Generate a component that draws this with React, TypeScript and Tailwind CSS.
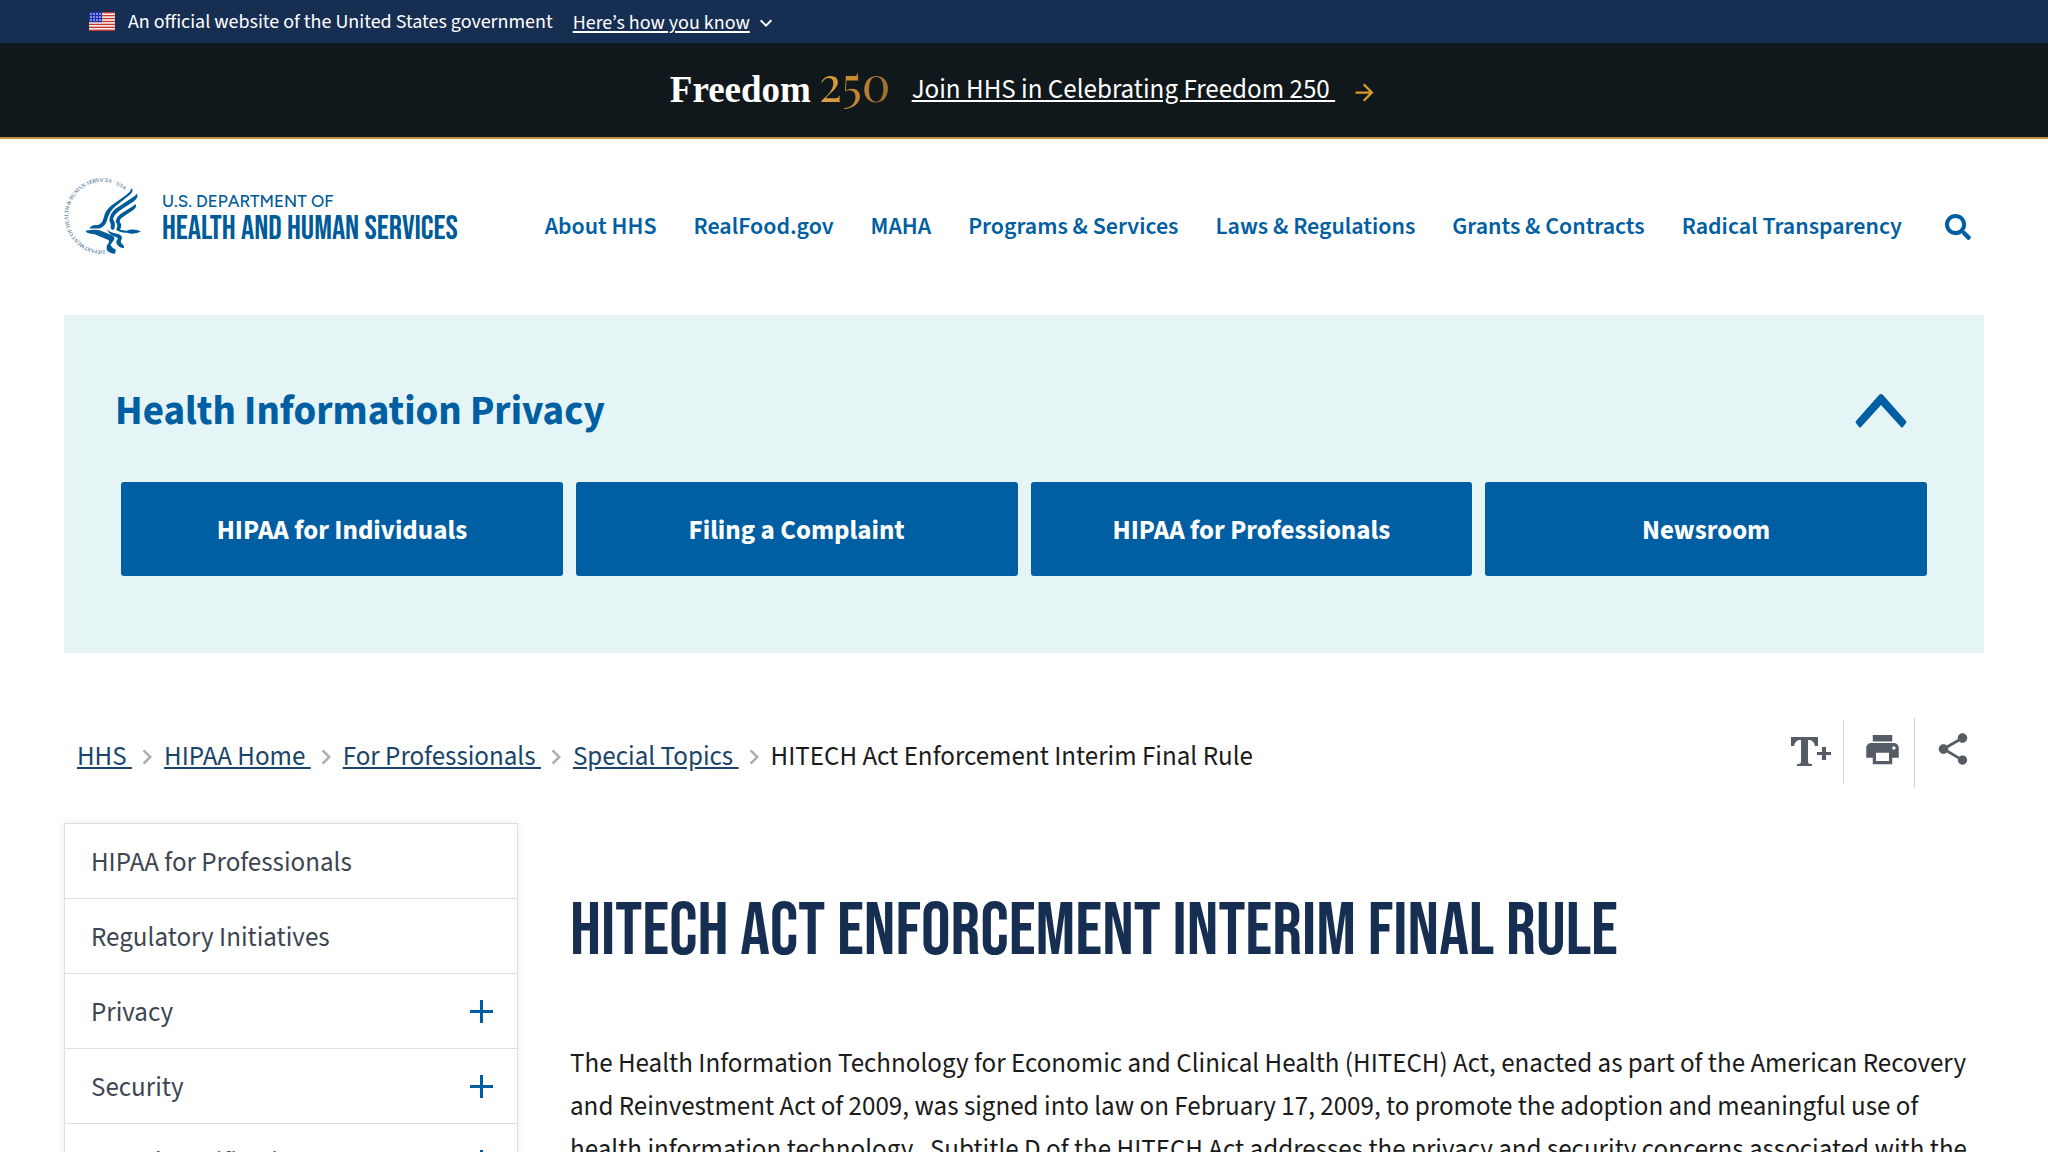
import { useState } from "react";
import { FaSearch } from "react-icons/fa";
import { MdArrowForward, MdExpandMore, MdNavigateNext, MdPrint, MdShare } from "react-icons/md";

const NAV_LINKS = [
  "About HHS",
  "RealFood.gov",
  "MAHA",
  "Programs & Services",
  "Laws & Regulations",
  "Grants & Contracts",
  "Radical Transparency",
];

const SECTION_LINKS = ["HIPAA for Individuals", "Filing a Complaint", "HIPAA for Professionals", "Newsroom"];

const CRUMBS = ["HHS", "HIPAA Home", "For Professionals", "Special Topics"];

const SIDE_LINKS = [
  { label: "HIPAA for Professionals", children: false },
  { label: "Regulatory Initiatives", children: false },
  { label: "Privacy", children: true },
  { label: "Security", children: true },
  { label: "Breach Notification", children: true },
];

function FlagIcon() {
  return (
    <svg viewBox="0 0 26 19" className="h-[19px] w-[26px]" aria-hidden="true">
      <rect width="26" height="19" fill="#fff" />
      {[0, 1, 2, 3, 4, 5, 6].map((i) => (
        <rect key={i} y={i * 2.92} width="26" height="1.46" fill="#c23a2b" />
      ))}
      <rect width="13" height="10.2" fill="#1e33b1" />
      {[2, 5, 8].map((y) =>
        [2, 5, 8, 11].map((x) => <circle key={`${x}-${y}`} cx={x} cy={y} r="0.8" fill="#fff" />)
      )}
    </svg>
  );
}

function HhsSeal() {
  return (
    <svg viewBox="42 50 232 232" className="size-[78px]" aria-hidden="true">
      <path id="seal-ring" d="M163 268 A102 102 0 1 1 240 108" fill="none" />
      <text className="fill-[#1a4f7c] font-['Liberation_Serif',serif] text-[16px]">
        <textPath href="#seal-ring">DEPARTMENT OF HEALTH &amp; HUMAN SERVICES · USA</textPath>
      </text>
      <g fill="#005b99">
        {/* wing feathers */}
        <path d="M244 83 Q250 92 238 103 L196 136 Q178 151 172 173 Q166 198 148 203 L118 203 Q122 194 136 193 Q155 194 160 172 Q163 150 184 134 L226 104 Q240 94 244 83Z" />
        <path d="M259 100 Q265 110 250 122 L208 150 Q190 163 188 176 Q198 190 190 208 Q182 206 180 200 Q184 192 177 180 Q177 160 196 144 L240 115 Q254 107 259 100Z" />
        <path d="M254 130 Q261 138 247 149 L217 169 Q206 177 208 184 Q217 194 208 206 Q216 209 228 210 Q246 202 271 211 Q250 224 230 216 Q210 217 197 207 Q205 195 196 184 Q196 171 210 160 L238 142 Q250 136 254 130Z" />
        {/* head, body and talons */}
        <path d="M105 210 L128 207 Q140 206 150 209 L184 223 Q196 229 190 238 L180 252 Q186 262 196 266 L194 278 Q178 278 170 268 Q166 256 174 247 Q180 239 170 236 L142 224 Q134 219 122 219 Q110 218 105 210Z" />
        <path d="M170 205 Q178 216 196 218 Q218 222 214 234 Q206 244 218 252 Q222 256 220 262 Q204 260 198 248 Q196 240 202 234 Q202 229 192 227 Q176 222 170 205Z" />
      </g>
    </svg>
  );
}

function TextSizeIcon() {
  return (
    <svg viewBox="0 0 40 30" className="h-[30px] w-10" fill="currentColor" aria-hidden="true">
      <path d="M0 0 H27 V9 H24 Q23 4 19 3 H17 V25 Q17 27 21 27 V29 H6 V27 Q10 27 10 25 V3 H8 Q4 4 3 9 H0Z" />
      <path d="M31 10 h4 v5 h5 v3 h-5 v5 h-4 v-5 h-5 v-3 h5z" />
    </svg>
  );
}

function SiteHeader() {
  return (
    <header className="flex items-center justify-between px-16 pt-[38px] pb-[60px]">
      <a href="#" className="flex items-center gap-5 text-[#005b99]" aria-label="HHS home">
        <HhsSeal />
        <span className="flex flex-col pt-[6px]">
          <span className="font-['Figtree','Lato',sans-serif] text-[17px] leading-5 font-medium">U.S. DEPARTMENT OF</span>
          <span className="font-['Bebas_Neue','Roboto_Condensed',sans-serif] text-[33px] leading-9">
            HEALTH AND HUMAN SERVICES
          </span>
        </span>
      </a>
      <div className="flex items-center gap-[43px] pt-[22px] pr-[13px]">
        <nav className="flex gap-[37px] text-[24px] leading-8 font-semibold text-[#005ea2]">
          {NAV_LINKS.map((link) => (
            <a key={link} href="#">
              {link}
            </a>
          ))}
        </nav>
        <button type="button" aria-label="Search" className="text-[#005ea2]">
          <FaSearch className="size-[26px]" />
        </button>
      </div>
    </header>
  );
}

function SectionPanel() {
  const [open, setOpen] = useState(true);
  return (
    <section className="mx-16 bg-[#e5f5f5] px-[51px] pt-[68px] pb-[77px]">
      <div className="flex items-center justify-between pr-[26px]">
        <h2 className="text-[41px] leading-[56px] font-bold text-[#005ea2]">Health Information Privacy</h2>
        <button type="button" aria-label="Toggle section menu" onClick={() => setOpen(!open)} className="text-[#005ea2]">
          <svg viewBox="0 0 52 34" className="h-[34px] w-[52px]" fill="currentColor" aria-hidden="true">
            <path d="M26 0 Q27 0 28 1 L51 27 Q52 28 51 29 L48 33 Q47 34 46 33 L26 11 L6 33 Q5 34 4 33 L1 29 Q0 28 1 27 L24 1 Q25 0 26 0Z" />
          </svg>
        </button>
      </div>
      {open && (
        <div className="mt-[43px] grid grid-cols-4 gap-[13px] px-[6px]">
          {SECTION_LINKS.map((link) => (
            <a
              key={link}
              href="#"
              className="flex h-[94px] items-center justify-center rounded-[3px] bg-[#005ea2] pt-1 text-[27px] font-bold text-white"
            >
              {link}
            </a>
          ))}
        </div>
      )}
    </section>
  );
}

function Toolbar() {
  return (
    <div className="flex items-start text-[#565c65]">
      <button type="button" aria-label="Text size" className="mt-[2px] flex h-16 items-center border-r border-[#d0d3d6] pr-3">
        <TextSizeIcon />
      </button>
      <button type="button" aria-label="Print" className="flex h-[70px] items-center border-r border-[#d0d3d6] pr-3 pb-2 pl-[19px]">
        <MdPrint className="size-[39px]" />
      </button>
      <button type="button" aria-label="Share" className="flex h-16 items-center pr-3 pb-[2px] pl-[19px]">
        <MdShare className="size-[38px]" />
      </button>
    </div>
  );
}

export default function App() {
  return (
    <div className="h-screen overflow-y-hidden bg-white font-['Source_Sans_3','Noto_Sans_CJK_SC',sans-serif] text-[#1b1b1b]">
      <div className="flex h-[43px] items-center bg-[#162e51] px-[89px] text-white">
        <FlagIcon />
        <p className="ml-[13px] text-[20px] leading-6">An official website of the United States government</p>
        <button type="button" className="ml-5 flex items-center pt-[3px] text-[20px] leading-6">
          <span className="underline underline-offset-2">Here’s how you know</span>
          <MdExpandMore className="ml-1 size-6" />
        </button>
      </div>

      <div className="flex h-24 items-center justify-center gap-[21px] border-b-2 border-[#c2903f] bg-[#11181b]">
        <div className="flex items-baseline gap-2 pb-2 leading-[60px] text-white">
          <span className="font-['Liberation_Serif',serif] text-[37px] font-bold">Freedom</span>
          <span className="bg-linear-to-r from-[#e0a848] via-[#c8862e] to-[#9a6a2c] bg-clip-text font-['Playfair_Display','Liberation_Serif',serif] text-[48px] oldstyle-nums text-transparent">
            250
          </span>
        </div>
        <a href="#" className="flex items-center gap-4 text-[27px] leading-9">
          <span className="whitespace-pre text-white underline underline-offset-2">{"Join HHS in Celebrating Freedom 250 "}</span>
          <MdArrowForward className="mt-1 size-[27px] text-[#d99a2b]" />
        </a>
      </div>

      <SiteHeader />
      <SectionPanel />

      <div className="mt-[65px] flex justify-between px-16">
        <nav aria-label="Breadcrumb" className="pt-[21px] pl-[13px]">
          <ol className="flex items-center text-[27px] leading-9">
            {CRUMBS.map((crumb) => (
              <li key={crumb} className="flex items-center">
                <a href="#" className="whitespace-pre text-[#1a4469] underline underline-offset-2">
                  {crumb + " "}
                </a>
                <MdNavigateNext className="mr-[2px] size-[30px] text-[#a9aeb1]" />
              </li>
            ))}
            <li>HITECH Act Enforcement Interim Final Rule</li>
          </ol>
        </nav>
        <Toolbar />
      </div>

      <div className="mt-[35px] flex items-start gap-[52px] px-16">
        <nav aria-label="Section" className="w-[454px] shrink-0 border border-[#dcdee0] shadow-[0_0_8px_rgba(0,0,0,0.08)]">
          <ul>
            {SIDE_LINKS.map((link) => (
              <li key={link.label} className="flex h-[75px] items-center justify-between border-b border-[#dcdee0] pr-6 pl-[26px]">
                <a href="#" className="pt-1 text-[27px] leading-9 text-[#3d4551]">
                  {link.label}
                </a>
                {link.children && (
                  <button type="button" aria-label={`Expand ${link.label}`} className="text-[#005ea2]">
                    <svg viewBox="0 0 23 23" className="size-[23px]" fill="currentColor" aria-hidden="true">
                      <path d="M10 0h3v10h10v3H13v10h-3V13H0v-3h10z" />
                    </svg>
                  </button>
                )}
              </li>
            ))}
          </ul>
        </nav>
        <main className="pt-[69px]">
          <h1 className="font-['Bebas_Neue','Roboto_Condensed',sans-serif] text-[74px] leading-[80px] text-[#162e51]">
            HITECH Act Enforcement Interim Final Rule
          </h1>
          <p className="mt-[70px] text-[27px] leading-[43px]">
            The Health Information Technology for Economic and Clinical Health (HITECH) Act, enacted as part of the American
            Recovery and Reinvestment Act of 2009, was signed into law on February 17, 2009, to promote the adoption and
            meaningful use of health information technology.&nbsp; Subtitle D of the HITECH Act addresses the privacy and
            security concerns associated with the electronic transmission of health information, in part, through several
            provisions that strengthen the civil and criminal enforcement of the HIPAA rules.
          </p>
        </main>
      </div>
    </div>
  );
}
